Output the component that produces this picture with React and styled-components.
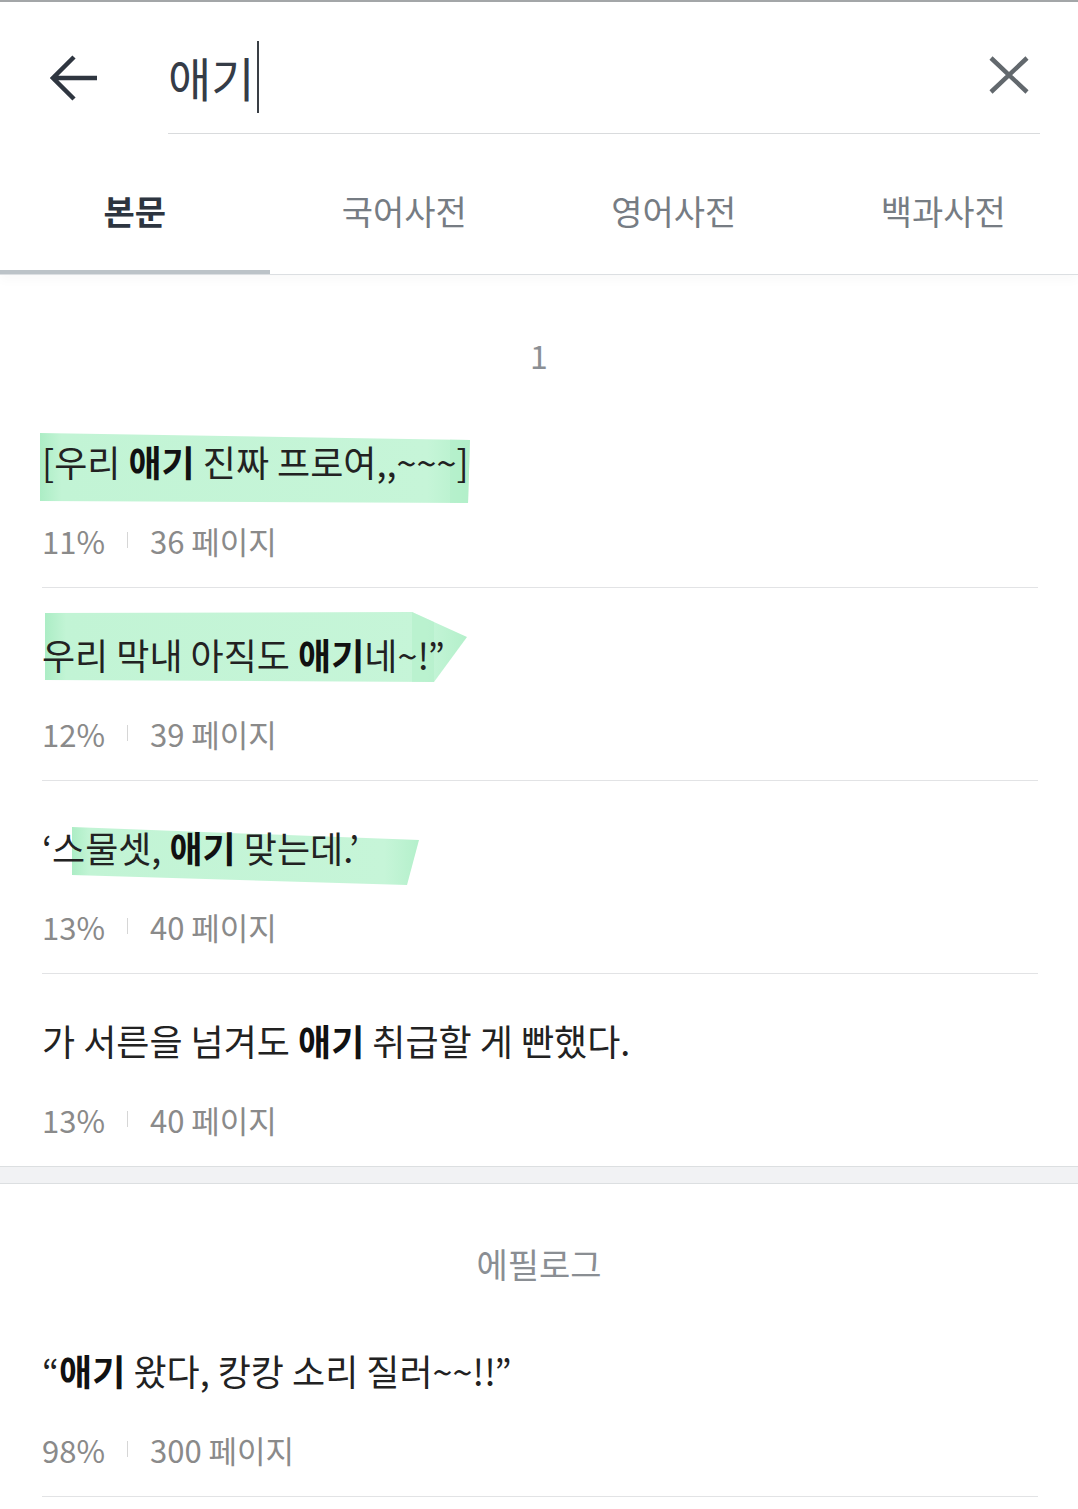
import React from 'react'
import styled, { createGlobalStyle } from 'styled-components'

const sections = [
  {
    label: '1',
    labelTone: 'page',
    items: [
      {
        id: 1,
        parts: [['[우리 ', false], ['애기', true], [' 진짜 프로여,,~~~]', false]],
        percent: '11%',
        page: '36 페이지',
        mark: { x: -2, y: -4, w: 432, h: 72, points: '0,0 430,7 428,70 0,68', stripe: 410 },
      },
      {
        id: 2,
        parts: [['우리 막내 아직도 ', false], ['애기', true], ['네~!”', false]],
        percent: '12%',
        page: '39 페이지',
        mark: { x: 3, y: -18, w: 424, h: 72, points: '0,1 367,0 422,25 389,70 0,68', stripe: 367 },
      },
      {
        id: 3,
        parts: [['‘스물셋, ', false], ['애기', true], [' 맞는데.’', false]],
        percent: '13%',
        page: '40 페이지',
        mark: { x: 30, y: 4, w: 350, h: 60, points: '0,0 347,13 335,58 0,48' },
      },
      {
        id: 4,
        parts: [['가 서른을 넘겨도 ', false], ['애기', true], [' 취급할 게 빤했다.', false]],
        percent: '13%',
        page: '40 페이지',
      },
    ],
  },
  {
    label: '에필로그',
    labelTone: 'chapter',
    items: [
      {
        id: 5,
        parts: [['“', false], ['애기', true], [' 왔다, 캉캉 소리 질러~~!!”', false]],
        percent: '98%',
        page: '300 페이지',
      },
    ],
  },
]

const tabs = ['본문', '국어사전', '영어사전', '백과사전']

const Highlight = ({ id, mark }) => (
  <Marker
    $x={mark.x}
    $y={mark.y}
    width={mark.w}
    height={mark.h}
    viewBox={`0 0 ${mark.w} ${mark.h}`}
  >
    <defs>
      <linearGradient id={`g${id}`} x1="0" x2="1" y1="0" y2="0">
        <stop offset="0" stopColor="#acedc5" />
        <stop offset="0.05" stopColor="#c2f4d5" />
        <stop offset="0.9" stopColor="#c6f5d8" />
        <stop offset="1" stopColor="#b4f0cb" />
      </linearGradient>
      <clipPath id={`c${id}`}>
        <polygon points={mark.points} />
      </clipPath>
    </defs>
    <polygon points={mark.points} fill={`url(#g${id})`} />
    {mark.stripe && (
      <rect
        x={mark.stripe}
        y="0"
        width="22"
        height={mark.h}
        fill="#b0eec8"
        opacity="0.55"
        clipPath={`url(#c${id})`}
      />
    )}
  </Marker>
)

const App = () => {
  return (
    <>
      <GlobalStyle />
      <Screen>
        <Header>
          <BackButton aria-label="뒤로">
            <svg width="50" height="48" viewBox="0 0 50 48" fill="none">
              <path d="M3 24 H47 M24 3 L3 24 L24 45" stroke="#2f3640" strokeWidth="4.5" strokeLinejoin="miter" />
            </svg>
          </BackButton>
          <SearchField>
            <Query>애기</Query>
            <Caret />
            <ClearButton aria-label="지우기">
              <svg width="40" height="38" viewBox="0 0 40 38" fill="none">
                <path d="M2 2 L38 36 M38 2 L2 36" stroke="#62686d" strokeWidth="4.5" />
              </svg>
            </ClearButton>
          </SearchField>
        </Header>

        <TabBar>
          {tabs.map((t, i) => (
            <Tab key={t} $active={i === 0}>{t}</Tab>
          ))}
        </TabBar>

        {sections.map((section, si) => (
          <Section key={section.label}>
            {si > 0 && <Band />}
            <SectionLabel $tone={section.labelTone}>{section.label}</SectionLabel>
            {section.items.map((item, ii) => (
              <Result key={item.id} $last={si === 0 && ii === section.items.length - 1}>
                <TextLine>
                  {item.mark && <Highlight id={item.id} mark={item.mark} />}
                  <Words>
                    {item.parts.map(([txt, bold], k) =>
                      bold ? <Hit key={k}>{txt}</Hit> : <span key={k}>{txt}</span>
                    )}
                  </Words>
                </TextLine>
                <Meta>
                  <span>{item.percent}</span>
                  <Divider />
                  <span>{item.page}</span>
                </Meta>
              </Result>
            ))}
          </Section>
        ))}
      </Screen>
    </>
  )
}

const GlobalStyle = createGlobalStyle`
  body {
    margin: 0;
    background: #fff;
    font-family: "Noto Sans CJK KR", "Noto Sans", sans-serif;
  }
`

const Screen = styled.div`
  width: 1078px;
  min-height: 1509px;
  background: #fff;
  border-top: 2px solid #a3a6a8;
  box-sizing: border-box;
`

const Header = styled.div`
  display: flex;
  align-items: stretch;
  height: 132px;
  padding-left: 50px;
  padding-right: 38px;
`

const BackButton = styled.div`
  display: flex;
  align-items: center;
  padding-top: 20px;
  width: 118px;
  flex-shrink: 0;
`

const SearchField = styled.div`
  flex: 1;
  display: flex;
  align-items: center;
  padding-top: 18px;
  padding-right: 11px;
  border-bottom: 1px solid #d9dbdd;
`

const Query = styled.span`
  font-size: 47px;
  line-height: 60px;
  color: #353c47;
`

const Caret = styled.span`
  width: 2px;
  height: 72px;
  margin-left: 3px;
  background: #3a3f45;
`

const ClearButton = styled.div`
  margin-left: auto;
  display: flex;
  align-items: center;
  margin-top: -4px;
`

const TabBar = styled.div`
  display: flex;
  border-bottom: 1px solid #dcdfe2;
  box-shadow: 0 6px 10px rgba(0, 0, 0, 0.025);
`

const Tab = styled.div`
  flex: 1;
  height: 120px;
  padding-top: 16px;
  display: flex;
  align-items: center;
  justify-content: center;
  font-size: 34px;
  font-weight: ${(p) => (p.$active ? 700 : 400)};
  color: ${(p) => (p.$active ? '#2d3540' : '#767c83')};
  border-bottom: 4px solid ${(p) => (p.$active ? '#bcc3c8' : 'transparent')};
`

const Section = styled.section`
  display: flex;
  flex-direction: column;
`

const Band = styled.div`
  height: 16px;
  background: #f1f2f4;
  border-top: 1px solid #dcdfe1;
  border-bottom: 1px solid #dcdfe1;
`

const SectionLabel = styled.div`
  padding: 60px 0 20px;
  text-align: center;
  font-size: ${(p) => (p.$tone === 'page' ? '32px' : '34px')};
  line-height: 40px;
  color: ${(p) => (p.$tone === 'page' ? '#8b8f94' : '#8a8e93')};
`

const Result = styled.div`
  margin: 0 40px 0 42px;
  padding: 42px 0 27px;
  border-bottom: ${(p) => (p.$last ? 'none' : '1px solid #e2e3e5')};
`

const TextLine = styled.div`
  position: relative;
  height: 48px;
`

const Marker = styled.svg`
  position: absolute;
  left: ${(p) => p.$x}px;
  top: ${(p) => p.$y}px;
  z-index: 0;
`

const Words = styled.div`
  position: relative;
  z-index: 1;
  font-size: 36px;
  line-height: 48px;
  color: #222;
  white-space: nowrap;
`

const Hit = styled.strong`
  font-weight: 700;
  color: #111;
`

const Meta = styled.div`
  display: flex;
  align-items: center;
  margin-top: 35px;
  height: 40px;
  font-size: 31px;
  color: #8a8a8a;
`

const Divider = styled.span`
  width: 1px;
  height: 16px;
  background: #d6d6d6;
  margin: 0 22px;
`

export default App
